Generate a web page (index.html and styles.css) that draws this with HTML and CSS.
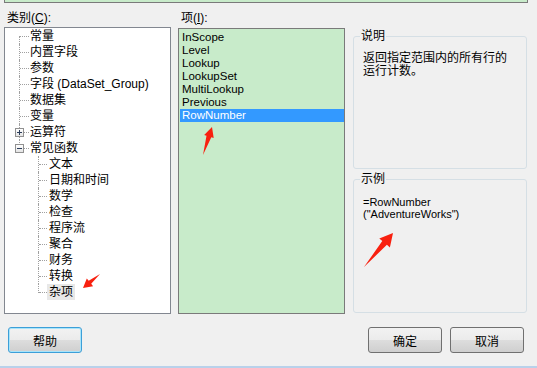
FILE: index.html
```html
<!DOCTYPE html>
<html lang="zh-CN">
<head>
  <meta charset="UTF-8" />
  <title>表达式</title>
  <meta name="viewport" content="width=device-width, initial-scale=1.0" />
  <link rel="stylesheet" href="styles.css">
</head>

<body>

  <!-- 上方表达式框 (只露出底边) -->
  <div class="top-strip"></div>

  <div class="main">

    <!-- 类别树 -->
    <div class="pane pane-cat">
      <div class="pane-label">类别(<u>C</u>):</div>
      <div class="tree-box">
        <ul class="tree">
          <li class="first">常量</li>
          <li>内置字段</li>
          <li>参数</li>
          <li>字段 (DataSet_Group)</li>
          <li>数据集</li>
          <li>变量</li>
          <li><span class="toggle plus"></span>运算符</li>
          <li class="last"><span class="toggle"></span>常见函数
            <ul class="sub">
              <li>文本</li>
              <li>日期和时间</li>
              <li>数学</li>
              <li>检查</li>
              <li>程序流</li>
              <li>聚合</li>
              <li>财务</li>
              <li>转换</li>
              <li class="last"><span class="sel">杂项</span></li>
            </ul>
          </li>
        </ul>
      </div>
    </div>

    <!-- 项列表 -->
    <div class="pane pane-items">
      <div class="pane-label">项(<u>I</u>):</div>
      <ul class="item-list">
        <li>InScope</li>
        <li>Level</li>
        <li>Lookup</li>
        <li>LookupSet</li>
        <li>MultiLookup</li>
        <li>Previous</li>
        <li class="selected">RowNumber</li>
      </ul>
    </div>

    <!-- 说明 / 示例 -->
    <div class="pane pane-info">
      <fieldset class="group group-desc">
        <legend>说明</legend>
        <p>返回指定范围内的所有行的运行计数。</p>
      </fieldset>
      <fieldset class="group group-example">
        <legend>示例</legend>
        <p>=RowNumber ("AdventureWorks")</p>
      </fieldset>
    </div>

  </div>

  <div class="buttons">
    <button class="btn btn-default">帮助</button>
    <span class="spacer"></span>
    <button class="btn">确定</button>
    <button class="btn btn-cancel">取消</button>
  </div>

  <div class="frame-edge"></div>

  <!-- 红色标注箭头 -->
  <svg class="marks" width="537" height="368" viewBox="0 0 537 368">
    <polygon points="83,288 86.8,278.4 88.7,280.8 100,274 91.2,283.8 93.1,286.2" />
    <polygon points="212,127 213.7,138 211.3,137.3 203,155 206.5,135.7 204.2,135" />
    <polygon points="393,233 389.9,247.4 386.9,244.8 364,267 382.3,241 379.3,238.4" />
  </svg>

</body>
</html>
```

FILE: styles.css
```css
* { margin: 0; padding: 0; box-sizing: border-box; }

body {
  width: 537px;
  height: 368px;
  background: #f0f0f0;
  font-family: "Liberation Sans", "Noto Sans CJK SC", sans-serif;
  font-size: 12px;
  color: #000;
  display: flex;
  flex-direction: column;
  position: relative;
  overflow: hidden;
}

/* 上方的绿色框底边 */
.top-strip {
  height: 3px;
  margin: 0 9px 0 4px;
  background: #c8ebca;
  border: 1px solid #7a7a7a;
  border-top: none;
}

.main {
  display: flex;
  height: 311px;
  padding: 7px 10px 0 4px;
}

.pane {
  display: flex;
  flex-direction: column;
}
.pane-label {
  line-height: 16px;
  padding-left: 3px;
}

/* 类别树 */
.pane-cat { width: 167px; }
.tree-box {
  flex: 1;
  margin-top: 1px;
  background: #fff;
  border: 1px solid #828790;
}
.tree, .tree ul { list-style: none; }
.tree li {
  position: relative;
  line-height: 16px;
  white-space: nowrap;
}
.tree > li { padding-left: 25px; }

/* 树的虚线 */
.tree > li::before {
  content: "";
  position: absolute;
  left: 14px; top: 0;
  height: 100%;
  border-left: 1px dotted #a0a0a0;
}
.tree > li::after {
  content: "";
  position: absolute;
  left: 15px; top: 8px;
  width: 9px;
  border-top: 1px dotted #a0a0a0;
}
.tree > li.first::before { top: 8px; height: auto; bottom: 0; }
.tree > li.last::before { height: 9px; }

.sub li { padding-left: 19px; }
.sub li::before {
  content: "";
  position: absolute;
  left: 8px; top: 0;
  height: 100%;
  border-left: 1px dotted #a0a0a0;
}
.sub li::after {
  content: "";
  position: absolute;
  left: 9px; top: 8px;
  width: 8px;
  border-top: 1px dotted #a0a0a0;
}
.sub li.last::before { height: 9px; }

.sel {
  display: inline-block;
  background: #e8e8e8;
  padding: 0 2px;
  margin-left: -2px;
}

/* 展开/折叠按钮 */
.toggle {
  position: absolute;
  left: 10px; top: 4px;
  width: 9px; height: 9px;
  border: 1px solid #919191;
  background: linear-gradient(#ffffff, #e4e4e4);
  z-index: 1;
}
.toggle::before {
  content: "";
  position: absolute;
  left: 1px; top: 3px;
  width: 5px; height: 1px;
  background: #2b3d5a;
}
.toggle.plus::after {
  content: "";
  position: absolute;
  left: 3px; top: 1px;
  width: 1px; height: 5px;
  background: #2b3d5a;
}

/* 项列表 */
.pane-items { width: 167px; margin-left: 7px; }
.item-list {
  flex: 1;
  list-style: none;
  margin-top: 2px;
  padding-top: 2px;
  background: #c8ebca;
  border: 1px solid #7a7a7a;
  font-size: 11.5px;
  line-height: 13px;
}
.item-list li { padding-left: 3px; }
.item-list li.selected {
  background: #3399ff;
  color: #fff;
  margin-left: 1px;
  padding-left: 2px;
}

/* 说明、示例分组框 */
.pane-info {
  width: 174px;
  margin-left: 8px;
  padding-top: 18px;
}
.group {
  border: 1px solid #d5dfe5;
  border-radius: 3px;
  padding: 8px 13px 0 9px;
  min-width: 0;
}
.group legend {
  line-height: 16px;
  padding: 0 1px;
  margin-left: -3px;
}
.group-desc { height: 141px; }
.group-desc p { line-height: 13px; }
.group-example {
  flex: 1;
  margin: 2px 0 1px;
  padding-top: 9px;
}
.group-example p {
  font-size: 11px;
  line-height: 12px;
}

/* 底部按钮 */
.buttons {
  display: flex;
  padding: 13px 13px 0 8px;
}
.spacer { flex: 1; }
.btn {
  width: 74px;
  height: 26px;
  font-family: inherit;
  font-size: 12px;
  color: #000;
  border: 1px solid #707070;
  border-radius: 3px;
  background: linear-gradient(#f2f2f2 0%, #ebebeb 50%, #dddddd 51%, #cfcfcf 100%);
}
.btn-default {
  border-color: #3c9fd8;
  box-shadow: inset 0 0 0 1px #a8e4fa;
}
.btn-cancel { margin-left: 8px; }

.frame-edge {
  margin-top: auto;
  height: 2px;
  background: #b9d1ea;
}

/* 标注箭头 */
.marks {
  position: absolute;
  left: 0; top: 0;
  pointer-events: none;
}
.marks polygon { fill: #f8200f; }
```
